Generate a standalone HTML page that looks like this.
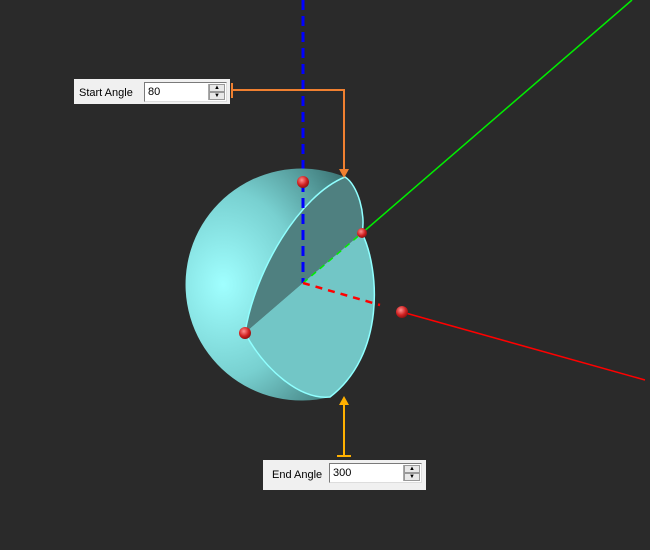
<!DOCTYPE html>
<html><head><style>
body{margin:0;width:650px;height:550px;background:#2a2a2a;overflow:hidden;position:relative;font-family:"Liberation Sans",sans-serif}
.p{position:absolute;background:#f0f0f0;font-size:11px;color:#000}
.p span{position:absolute}
.in{position:absolute;background:#fff;border:1px solid #7a7a7a;border-right-color:#ddd;border-bottom-color:#ddd;box-sizing:border-box;font-size:11px;padding:3px 3px}
.sp{position:absolute;right:1px;top:1px;width:16px;bottom:1px;background:#e8e8e8;border-left:1px solid #aaa}
.sp div{height:50%;box-sizing:border-box;border:1px solid #999;font-size:6px;text-align:center;line-height:7px}
</style></head><body>
<svg width="650" height="550" style="position:absolute;left:0;top:0">
<defs>
<radialGradient id="g" cx="0.2" cy="0.5" r="0.9">
<stop offset="0" stop-color="#a0ffff"/><stop offset="0.45" stop-color="#78d0d0"/><stop offset="1" stop-color="#2a5a5a"/>
</radialGradient>
<radialGradient id="b" cx="0.4" cy="0.35" r="0.7"><stop offset="0" stop-color="#ff9090"/><stop offset="0.6" stop-color="#d02020"/><stop offset="1" stop-color="#801010"/></radialGradient>
</defs>
<line x1="303" y1="0" x2="303" y2="283" stroke="#0000ff" stroke-width="3" stroke-dasharray="10,6"/>
<line x1="362" y1="233" x2="632" y2="0" stroke="#00ee00" stroke-width="1.5"/>
<line x1="402" y1="312" x2="645" y2="380" stroke="#ff0000" stroke-width="1.5"/>
<path d="M345,177 C358,185 366,215 362,233 C380,270 385,355 330,397 A116,116 0 1 1 345,177 Z" fill="url(#g)"/>
<path d="M303,283 L245,333 C255,270 300,195 345,177 C358,185 366,215 362,233 Z" fill="#4f8080"/>
<path d="M303,283 L245,333 C265,370 300,400 330,397 C385,355 380,270 362,233 Z" fill="#72c6c6"/>
<path d="M245,333 C255,270 300,195 345,177 C358,185 366,215 362,233 C380,270 385,355 330,397 C300,400 265,370 245,333" fill="none" stroke="#90ffff" stroke-width="1.5"/>
<line x1="303" y1="182" x2="303" y2="283" stroke="#0000ff" stroke-width="3" stroke-dasharray="10,6"/>
<line x1="303" y1="283" x2="362" y2="233" stroke="#00ee00" stroke-width="1.5" stroke-dasharray="6,5"/>
<line x1="303" y1="283" x2="380" y2="305" stroke="#ff0000" stroke-width="2.5" stroke-dasharray="7,6"/>
<circle cx="303" cy="182" r="6" fill="url(#b)"/>
<circle cx="362" cy="233" r="5" fill="url(#b)"/>
<circle cx="245" cy="333" r="6" fill="url(#b)"/>
<circle cx="402" cy="312" r="6" fill="url(#b)"/>
<path d="M232,90 H344 V170" fill="none" stroke="#f08030" stroke-width="2"/>
<line x1="232" y1="83" x2="232" y2="98" stroke="#f08030" stroke-width="2"/>
<path d="M339,169 L349,169 L344,178 Z" fill="#f08030"/>
<path d="M344,456 V404" fill="none" stroke="#ffb000" stroke-width="2"/>
<line x1="337" y1="456" x2="351" y2="456" stroke="#ffb000" stroke-width="2"/>
<path d="M339,405 L349,405 L344,396 Z" fill="#ffb000"/>
</svg>
<div class="p" style="left:74px;top:79px;width:156px;height:25px"><span style="left:5px;top:8px">Start Angle</span>
<div class="in" style="left:70px;top:3px;width:83px;height:20px">80<div class="sp"><div>▲</div><div>▼</div></div></div></div>
<div class="p" style="left:263px;top:460px;width:163px;height:30px"><span style="left:9px;top:9px">End Angle</span>
<div class="in" style="left:66px;top:3px;width:93px;height:20px">300<div class="sp"><div>▲</div><div>▼</div></div></div></div>
</body></html>
